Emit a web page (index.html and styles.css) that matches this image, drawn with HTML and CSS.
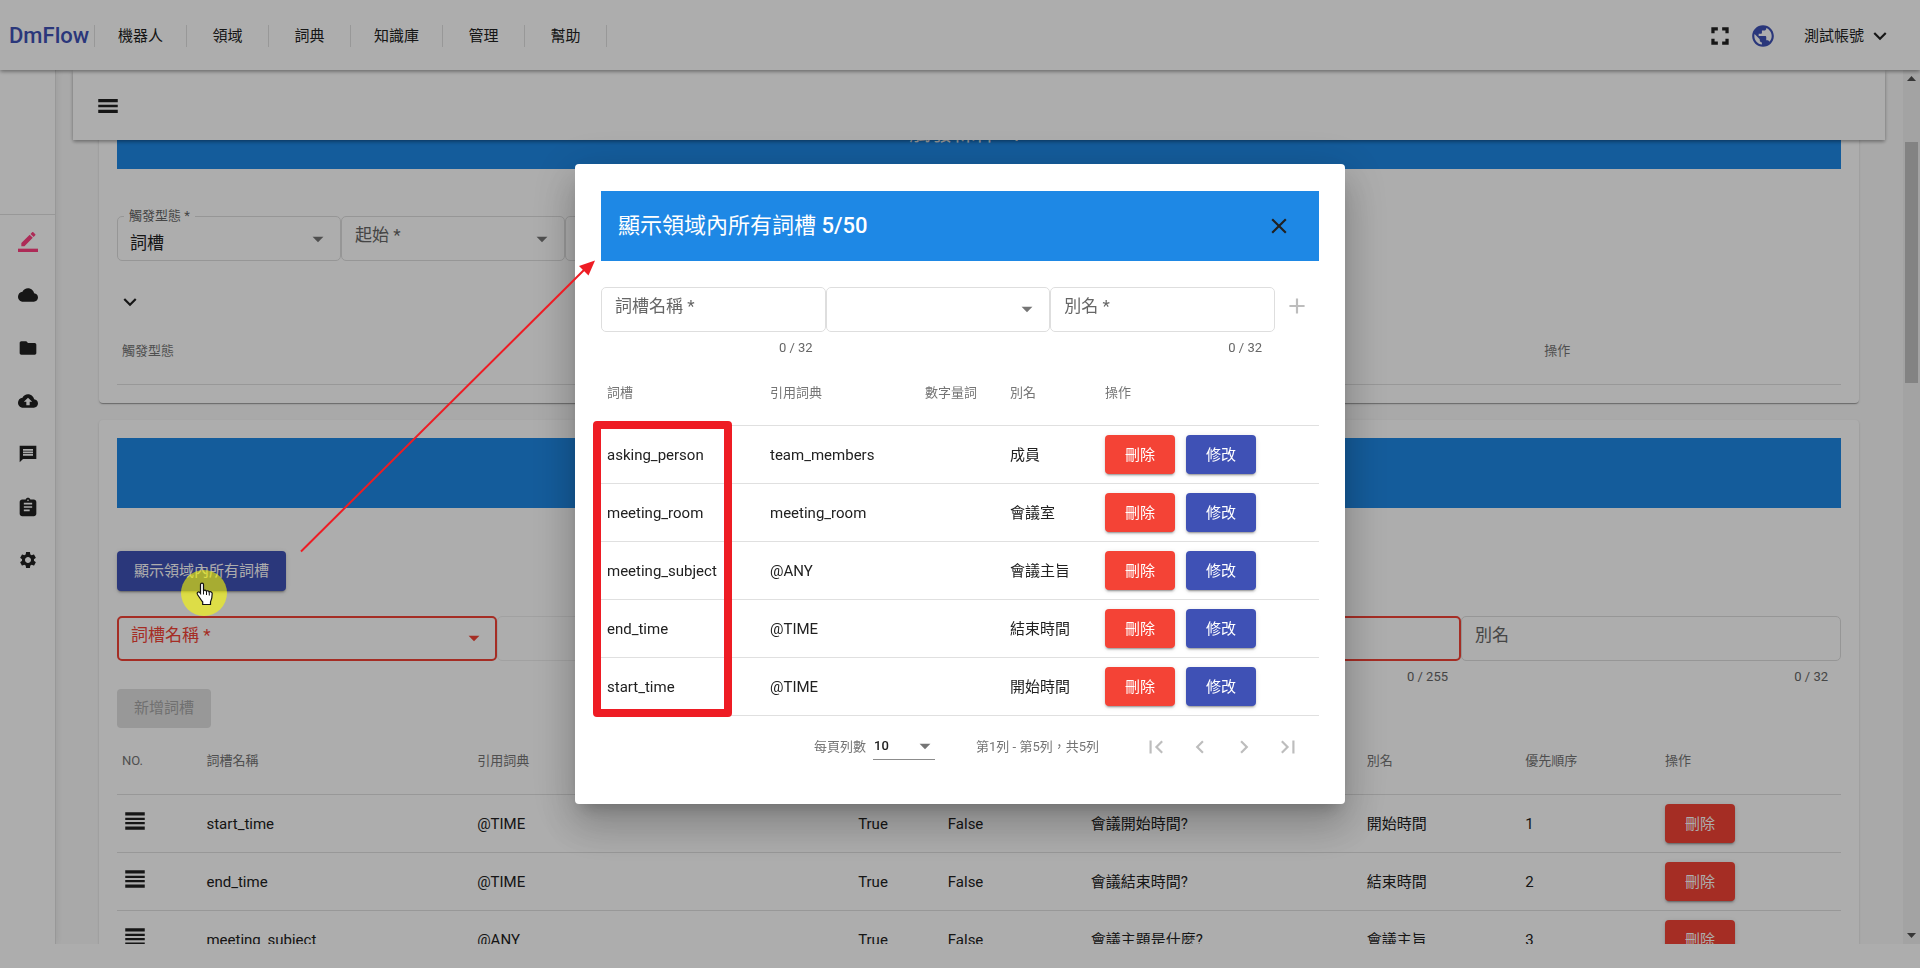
FILE: index.html
```html
<!DOCTYPE html>
<html lang="zh-Hant">
<head>
<meta charset="utf-8">
<title>DmFlow</title>
<link rel="stylesheet" href="styles.css">
</head>
<body>
<svg class="defs" aria-hidden="true">
  <symbol id="i-edit" viewBox="0 0 24 24"><path d="M17.75 7 14 3.250l-10 10V17h3.750l10-10zm2.960-2.960c.39-.39.39-1.020 0-1.410L18.370.29c-.39-.39-1.020-.39-1.410 0L15 2.250 18.750 6l1.960-1.960z"/><path d="M0 20h24v4H0z"/></symbol>
  <symbol id="i-cloud" viewBox="0 0 24 24"><path d="M19.350 10.040C18.670 6.590 15.640 4 12 4 9.110 4 6.600 5.640 5.350 8.040 2.340 8.360 0 10.910 0 14c0 3.310 2.690 6 6 6h13c2.760 0 5-2.240 5-5 0-2.640-2.050-4.780-4.650-4.960z"/></symbol>
  <symbol id="i-folder" viewBox="0 0 24 24"><path d="M10 4H4c-1.100 0-1.990.9-1.990 2L2 18c0 1.100.9 2 2 2h16c1.100 0 2-.9 2-2V8c0-1.100-.9-2-2-2h-8l-2-2z"/></symbol>
  <symbol id="i-upload" viewBox="0 0 24 24"><path d="M19.350 10.040C18.670 6.590 15.640 4 12 4 9.110 4 6.600 5.640 5.350 8.040 2.340 8.360 0 10.910 0 14c0 3.310 2.690 6 6 6h13c2.760 0 5-2.240 5-5 0-2.640-2.050-4.780-4.650-4.960zM14 13v4h-4v-4H7l5-5 5 5h-3z"/></symbol>
  <symbol id="i-chat" viewBox="0 0 24 24"><path d="M22 2H2v20l4-4h16V2zm-4 12H6v-2h12v2zm0-3H6V9h12v2zm0-3H6V6h12v2z"/></symbol>
  <symbol id="i-clip" viewBox="0 0 24 24"><path d="M19 3h-4.180C14.400 1.840 13.300 1 12 1c-1.300 0-2.400.84-2.820 2H5C3.500 3 2 4.500 2 6v14c0 1.500 1.500 3 3 3h14c1.500 0 3-1.500 3-3V6c0-1.500-1.500-3-3-3zm-7 0c.55 0 1 .45 1 1s-.45 1-1 1-1-.45-1-1 .45-1 1-1zm2 14H7v-2h7v2zm3-4H7v-2h10v2zm0-4H7V7h10v2z"/></symbol>
  <symbol id="i-gear" viewBox="0 0 24 24"><path d="M19.140 12.940c.04-.3.06-.61.06-.94 0-.32-.02-.64-.07-.94l2.030-1.580c.18-.14.23-.41.12-.61l-1.920-3.320c-.12-.22-.37-.29-.59-.22l-2.390.96c-.5-.38-1.030-.7-1.620-.94l-.36-2.540c-.04-.24-.24-.41-.48-.41h-3.840c-.24 0-.43.17-.47.41l-.36 2.540c-.59.24-1.130.57-1.620.94l-2.390-.96c-.22-.08-.47 0-.59.22L2.740 8.870c-.12.21-.08.47.12.61l2.030 1.580c-.05.3-.09.63-.09.94s.02.64.07.94l-2.030 1.580c-.18.14-.23.41-.12.61l1.920 3.320c.12.22.37.29.59.22l2.390-.96c.5.38 1.030.7 1.620.94l.36 2.540c.05.24.24.41.48.41h3.840c.24 0 .44-.17.47-.41l.36-2.540c.59-.24 1.130-.56 1.620-.94l2.390.96c.22.08.47 0 .59-.22l1.920-3.320c.12-.22.07-.47-.12-.61l-2.010-1.580zM12 15.600c-1.980 0-3.600-1.620-3.600-3.600s1.620-3.600 3.600-3.600 3.600 1.620 3.600 3.600-1.620 3.600-3.600 3.600z"/></symbol>
  <symbol id="i-full" viewBox="0 0 24 24"><path d="M4 14.500h3V17h3v3H4zM4 9.500h3V7h3V4H4zM17 17h-3v3h6v-5.500h-3zM14 4v3h3v2.500h3V4z"/></symbol>
  <symbol id="i-globe" viewBox="0 0 24 24"><path d="M12 2C6.480 2 2 6.480 2 12s4.480 10 10 10 10-4.480 10-10S17.520 2 12 2zm-1 17.930c-3.950-.49-7-3.850-7-7.930 0-.62.08-1.210.21-1.790L9 15v1c0 1.100.9 2 2 2v1.930zm6.900-2.540c-.26-.81-1-1.390-1.900-1.390h-1v-3c0-.55-.45-1-1-1H8v-2h2c.55 0 1-.45 1-1V7h2c1.100 0 2-.9 2-2v-.41c2.930 1.190 5 4.060 5 7.410 0 2.080-.8 3.970-2.100 5.390z"/></symbol>
  <symbol id="i-down" viewBox="0 0 24 24"><path d="M7.410 8.590 12 13.170l4.590-4.580L18 10l-6 6-6-6 1.410-1.410z"/></symbol>
  <symbol id="i-menu" viewBox="0 0 24 24"><path d="M3 18.500h18v-3H3v3zm0-5.250h18v-2.500H3v2.500zM3 5.500v3h18v-3H3z"/></symbol>
  <symbol id="i-caret" viewBox="0 0 24 24"><path d="M7 10l5 5 5-5z"/></symbol>
  <symbol id="i-close" viewBox="0 0 24 24"><path d="M19 6.410 17.590 5 12 10.590 6.410 5 5 6.410 10.590 12 5 17.590 6.410 19 12 13.410 17.590 19 19 17.590 13.410 12z"/></symbol>
  <symbol id="i-add" viewBox="0 0 24 24"><path d="M19 13h-6v6h-2v-6H5v-2h6V5h2v6h6v2z"/></symbol>
  <symbol id="i-drag" viewBox="0 0 24 24"><path d="M3 15h18v-2H3v2zm0 5h18v-3H3v3zm0-9h18V9H3v2zm0-7v3h18V4H3z"/></symbol>
  <symbol id="i-first" viewBox="0 0 24 24"><path d="M18.410 16.590 13.820 12l4.590-4.590L17 6l-6 6 6 6zM6 6h2v12H6z"/></symbol>
  <symbol id="i-prev" viewBox="0 0 24 24"><path d="M15.410 7.410 14 6l-6 6 6 6 1.410-1.410L10.830 12z"/></symbol>
  <symbol id="i-next" viewBox="0 0 24 24"><path d="M10 6 8.590 7.410 13.170 12l-4.580 4.590L10 18l6-6z"/></symbol>
  <symbol id="i-last" viewBox="0 0 24 24"><path d="M5.590 7.410 10.180 12l-4.590 4.590L7 18l6-6-6-6zM16 6h2v12h-2z"/></symbol>
</svg>

<header class="topbar">
  <a class="logo" href="#">DmFlow</a>
  <nav class="mainnav">
    <button type="button">機器人</button>
    <button type="button">領域</button>
    <button type="button">詞典</button>
    <button type="button">知識庫</button>
    <button type="button">管理</button>
    <button type="button">幫助</button>
  </nav>
  <div class="tools">
    <button class="iconbtn" type="button" aria-label="全螢幕"><svg class="icon"><use href="#i-full"/></svg></button>
    <button class="iconbtn globe" type="button" aria-label="語言"><svg class="icon"><use href="#i-globe"/></svg></button>
    <button class="account" type="button">測試帳號<svg class="icon"><use href="#i-down"/></svg></button>
  </div>
</header>

<div class="body">
  <aside class="sidebar">
    <div class="sidehead"></div>
    <button class="active" type="button" aria-label="編輯"><svg class="icon"><use href="#i-edit"/></svg></button>
    <button type="button" aria-label="雲端"><svg class="icon"><use href="#i-cloud"/></svg></button>
    <button type="button" aria-label="資料夾"><svg class="icon"><use href="#i-folder"/></svg></button>
    <button type="button" aria-label="上傳"><svg class="icon"><use href="#i-upload"/></svg></button>
    <button type="button" aria-label="訊息"><svg class="icon"><use href="#i-chat"/></svg></button>
    <button type="button" aria-label="紀錄"><svg class="icon"><use href="#i-clip"/></svg></button>
    <button type="button" aria-label="設定"><svg class="icon"><use href="#i-gear"/></svg></button>
  </aside>

  <main class="main">
    <div class="appbar">
      <button class="iconbtn" type="button" aria-label="選單"><svg class="icon"><use href="#i-menu"/></svg></button>
    </div>

    <section class="card trigger">
      <h2 class="banner">觸發條件 <span class="count">0/10</span></h2>
      <div class="fields narrow">
        <div class="field floating">
          <label for="t1">觸發型態 *</label>
          <select id="t1"><option>詞槽</option></select>
          <svg class="icon caret"><use href="#i-caret"/></svg>
        </div>
        <div class="field">
          <label for="t2">起始 *</label>
          <select id="t2"><option></option></select>
          <svg class="icon caret"><use href="#i-caret"/></svg>
        </div>
        <div class="field">
          <select id="t3" aria-label="結束"><option></option></select>
          <svg class="icon caret"><use href="#i-caret"/></svg>
        </div>
      </div>
      <button class="iconbtn expand" type="button" aria-label="展開"><svg class="icon"><use href="#i-down"/></svg></button>
      <table class="grid">
        <colgroup><col class="t-type"><col></colgroup>
        <thead><tr><th>觸發型態</th><th>操作</th></tr></thead>
      </table>
    </section>

    <section class="card">
      <h2 class="banner"></h2>
      <button class="btn blue show" type="button">顯示領域內所有詞槽</button>
      <div class="fields slots">
        <div class="field error">
          <label for="s1">詞槽名稱 *</label>
          <select id="s1"><option></option></select>
          <svg class="icon caret"><use href="#i-caret"/></svg>
        </div>
        <div class="field disabled"><input id="s2" type="text" aria-label="引用詞典" disabled></div>
        <div class="field"><input id="s3" type="text" aria-label="必填"></div>
        <div class="field error"><input id="s4" type="text" aria-label="問句"></div>
        <div class="field"><label for="s5">別名</label><input id="s5" type="text"></div>
        <span class="hint"></span><span class="hint"></span><span class="hint"></span>
        <span class="hint">0 / 255</span><span class="hint">0 / 32</span>
      </div>
      <button class="btn off" type="button" disabled>新增詞槽</button>
      <table class="grid main-table">
        <colgroup><col class="m1"><col class="m2"><col class="m3"><col class="m4"><col class="m5"><col class="m6"><col class="m7"><col class="m8"><col class="m9"></colgroup>
        <thead><tr><th>NO.</th><th>詞槽名稱</th><th>引用詞典</th><th></th><th></th><th></th><th>別名</th><th>優先順序</th><th>操作</th></tr></thead>
        <tbody>
          <tr><td><svg class="icon"><use href="#i-drag"/></svg></td><td>start_time</td><td>@TIME</td><td>True</td><td>False</td><td>會議開始時間?</td><td>開始時間</td><td>1</td><td><button class="btn red" type="button">刪除</button></td></tr>
          <tr><td><svg class="icon"><use href="#i-drag"/></svg></td><td>end_time</td><td>@TIME</td><td>True</td><td>False</td><td>會議結束時間?</td><td>結束時間</td><td>2</td><td><button class="btn red" type="button">刪除</button></td></tr>
          <tr><td><svg class="icon"><use href="#i-drag"/></svg></td><td>meeting_subject</td><td>@ANY</td><td>True</td><td>False</td><td>會議主題是什麼?</td><td>會議主旨</td><td>3</td><td><button class="btn red" type="button">刪除</button></td></tr>
        </tbody>
      </table>
    </section>
  </main>

  <div class="scrollbar" aria-hidden="true">
    <svg viewBox="0 0 17 17"><path d="M4 11h9L8.500 6z"/></svg>
    <div class="thumb"></div>
    <svg class="bottom" viewBox="0 0 17 17"><path d="M4 6h9l-4.500 5z"/></svg>
  </div>
</div>
<footer class="bottomstrip"></footer>

<div class="backdrop">
  <div class="dialog" role="dialog" aria-labelledby="dlg-title">
    <div class="dlg-head">
      <h2 id="dlg-title">顯示領域內所有詞槽 <span class="count">5/50</span></h2>
      <button class="iconbtn" type="button" aria-label="關閉"><svg class="icon"><use href="#i-close"/></svg></button>
    </div>
    <div class="fields dlg-fields">
      <div class="field"><label for="d1">詞槽名稱 *</label><input id="d1" type="text"></div>
      <div class="field">
        <select id="d2" aria-label="引用詞典"><option></option></select>
        <svg class="icon caret"><use href="#i-caret"/></svg>
      </div>
      <div class="field"><label for="d3">別名 *</label><input id="d3" type="text"></div>
      <button class="iconbtn add" type="button" aria-label="新增" disabled><svg class="icon"><use href="#i-add"/></svg></button>
      <span class="hint">0 / 32</span><span class="hint"></span><span class="hint">0 / 32</span>
    </div>
    <table class="grid dlg-table">
      <colgroup><col class="d1"><col class="d2"><col class="d3"><col class="d4"><col></colgroup>
      <thead><tr><th>詞槽</th><th>引用詞典</th><th>數字量詞</th><th>別名</th><th>操作</th></tr></thead>
      <tbody>
        <tr><td>asking_person</td><td>team_members</td><td></td><td>成員</td><td><div class="actions"><button class="btn red" type="button">刪除</button><button class="btn blue" type="button">修改</button></div></td></tr>
        <tr><td>meeting_room</td><td>meeting_room</td><td></td><td>會議室</td><td><div class="actions"><button class="btn red" type="button">刪除</button><button class="btn blue" type="button">修改</button></div></td></tr>
        <tr><td>meeting_subject</td><td>@ANY</td><td></td><td>會議主旨</td><td><div class="actions"><button class="btn red" type="button">刪除</button><button class="btn blue" type="button">修改</button></div></td></tr>
        <tr><td>end_time</td><td>@TIME</td><td></td><td>結束時間</td><td><div class="actions"><button class="btn red" type="button">刪除</button><button class="btn blue" type="button">修改</button></div></td></tr>
        <tr><td>start_time</td><td>@TIME</td><td></td><td>開始時間</td><td><div class="actions"><button class="btn red" type="button">刪除</button><button class="btn blue" type="button">修改</button></div></td></tr>
      </tbody>
    </table>
    <div class="pager">
      <label for="rows">每頁列數</label>
      <div class="pagesize">
        <select id="rows"><option>10</option></select>
        <svg class="icon caret"><use href="#i-caret"/></svg>
      </div>
      <span class="range">第1列 - 第5列，共5列</span>
      <button type="button" aria-label="第一頁" disabled><svg class="icon"><use href="#i-first"/></svg></button>
      <button type="button" aria-label="上一頁" disabled><svg class="icon"><use href="#i-prev"/></svg></button>
      <button type="button" aria-label="下一頁" disabled><svg class="icon"><use href="#i-next"/></svg></button>
      <button type="button" aria-label="最後一頁" disabled><svg class="icon"><use href="#i-last"/></svg></button>
    </div>
  </div>
</div>

<svg class="annotations" viewBox="0 0 1920 968" aria-hidden="true">
  <circle cx="204" cy="593" r="23" fill="#ffff00" fill-opacity=".59"/>
  <path d="M301 551.500 586 268" stroke="#ee1c24" stroke-width="2" fill="none"/>
  <path d="M595 260.500 579 266 588.500 275.500z" fill="#ee1c24"/>
  <rect x="597" y="425" width="131" height="288" fill="none" stroke="#ee1c24" stroke-width="8" stroke-linejoin="round"/>
  <path d="M200.500 584.500c0-1.800 3-1.800 3 0v6.500c.5-1.200 2.600-1 2.900.3.700-1 2.600-.6 2.800.8.800-.8 3-.3 3 1.500 0 4-.1 5.400-1.700 8.400v2.500h-7.800v-2.500c-2-2.400-3.200-4.600-5.200-7.500-1.200-1.900 1-3.300 2.400-1.900l.6.800z" fill="#fff" stroke="#111" stroke-width="1.200"/>
  <path d="M203.500 590v4.500M206.500 591.500v3.500M209.300 592.500v3" stroke="#111" fill="none"/>
</svg>
</body>
</html>
```
FILE: styles.css
```css
* { box-sizing: border-box; }
body {
  margin: 0;
  height: 100vh;
  display: flex;
  flex-direction: column;
  overflow: hidden;
  background: #fff;
  color: #212121;
  font: 15px/20px Roboto, "Noto Sans CJK TC", sans-serif;
}
button, input, select { font: inherit; color: inherit; }
button { border: 0; padding: 0; background: none; }
h2 { margin: 0; font-size: 22px; font-weight: 400; line-height: 26px; }
.count { font-weight: 500; }
.defs { position: absolute; width: 0; height: 0; }
.icon { width: 26px; height: 26px; fill: currentColor; display: block; flex: none; }
.iconbtn { color: #212121; }

.topbar {
  flex: none;
  height: 70px;
  display: flex;
  align-items: center;
  padding: 2px 27px 0 9px;
  background: #fff;
  box-shadow: 0 2px 4px -1px rgba(0,0,0,.2), 0 2px 3px rgba(0,0,0,.14), 0 1px 5px rgba(0,0,0,.12);
  position: relative;
  z-index: 3;
}
.logo { width: 85px; color: #3f51b5; font-size: 22px; font-weight: 500; text-decoration: none; }
.mainnav { display: flex; border-left: 1px solid #e0e0e0; }
.mainnav button { min-width: 82px; padding: 0 23px; height: 22px; border-right: 1px solid #e0e0e0; }
.tools { margin-left: auto; display: flex; align-items: center; }
.globe { color: #3f51b5; margin: 0 28px 0 17px; }
.account { display: flex; align-items: center; gap: 3px; }

.body { flex: 1; min-height: 0; display: flex; background: #fafafa; overflow: hidden; }
.sidebar {
  width: 56px;
  flex: none;
  display: flex;
  flex-direction: column;
  background: #fff;
  border-right: 1px solid #e0e0e0;
  box-shadow: 0 0 8px rgba(0,0,0,.1);
}
.sidehead { height: 145px; flex: none; border-bottom: 1px solid #e0e0e0; }
.sidebar button { height: 53px; display: flex; align-items: center; justify-content: center; }
.sidebar .icon { width: 20px; height: 20px; }
.sidebar .active { color: #ff4081; }

.main { flex: 1; min-width: 0; overflow: hidden; padding: 0 18px 0 17px; }
.appbar {
  height: 70px;
  display: flex;
  align-items: center;
  padding: 2px 22px 0;
  background: #fff;
  position: relative;
  z-index: 2;
  box-shadow: 0 2px 4px -1px rgba(0,0,0,.2), 0 2px 3px rgba(0,0,0,.14), 0 1px 5px rgba(0,0,0,.12);
}
.card {
  margin: 0 26px 17px;
  padding: 18px;
  background: #fff;
  border-radius: 4px;
  box-shadow: 0 2px 1px -1px rgba(0,0,0,.2), 0 1px 1px rgba(0,0,0,.14), 0 1px 3px rgba(0,0,0,.12);
}
.trigger { margin-top: -59px; }
.banner { height: 70px; padding: 21px 0; background: #1e88e5; color: #fff; text-align: center; }

.fields { display: grid; }
.narrow { grid-template-columns: 13% 13% 13%; margin-top: 47px; }
.slots { grid-template-columns: 380fr 380fr 204fr 380fr 380fr; margin-top: 25px; }
.dlg-fields { grid-template-columns: 1fr 1fr 1fr 44px; margin-top: 26px; }
.field { display: grid; position: relative; height: 45px; }
.field > * { grid-area: 1 / 1; }
.field input, .field select, .pagesize select {
  width: 100%;
  min-width: 0;
  margin: 0;
  appearance: none;
  background: transparent;
  outline: 0;
}
.field input, .field select {
  padding: 8px 12px 0;
  border: 1px solid #dedede;
  border-radius: 5px;
  font-size: 17px;
}
.field label { align-self: start; padding: 0 14px; font-size: 17px; line-height: 39px; color: #666; white-space: nowrap; }
.field .caret { align-self: center; justify-self: end; margin-right: 10px; }
.caret { color: #757575; pointer-events: none; }
.field.floating label {
  position: absolute;
  z-index: 1;
  top: -10px;
  left: 7px;
  padding: 0 5px;
  background: #fff;
  font-size: 13px;
  line-height: 20px;
}
.field.error input, .field.error select { border: 2px solid #f44336; padding: 7px 12px 0; }
.field.error label, .field.error .caret { color: #f44336; }
.field.disabled input { border-color: #eee; }
.hint { height: 28px; padding-right: 13px; font-size: 13px; line-height: 32px; color: #666; text-align: right; }
.expand { margin: 28px 0 3px; display: block; }

.btn {
  height: 40px;
  padding: 0 17px;
  border-radius: 4px;
  color: #fff;
  white-space: nowrap;
  box-shadow: 0 3px 1px -2px rgba(0,0,0,.2), 0 2px 2px rgba(0,0,0,.14), 0 1px 5px rgba(0,0,0,.12);
}
.grid .btn { width: 70px; height: 39px; padding: 0; display: block; }
.red { background: #f44336; }
.blue { background: #3f51b5; }
.show { display: block; margin-top: 43px; }
.off { display: block; height: 39px; background: #e0e0e0; color: #a6a6a6; box-shadow: none; }

.grid { width: 100%; table-layout: fixed; border-collapse: collapse; }
.grid th { height: 66px; padding: 0 5px; border-bottom: 1px solid #e0e0e0; color: #757575; font-size: 13px; font-weight: 400; text-align: left; }
.grid td { height: 58px; padding: 0 5px; border-bottom: 1px solid #e0e0e0; white-space: nowrap; }
.grid td > .icon { margin-bottom: 5px; }
.main-table th { height: 67px; }
.dlg-table th:first-child, .dlg-table td:first-child { padding-left: 6px; }
.t-type { width: 82.5%; }
.m1 { width: 4.9%; } .m2 { width: 15.7%; } .m3 { width: 22.1%; } .m4 { width: 5.2%; } .m5 { width: 8.3%; }
.m6 { width: 16%; } .m7 { width: 9.2%; } .m8 { width: 8.1%; } .m9 { width: 10.5%; }

.scrollbar { width: 17px; flex: none; display: flex; flex-direction: column; background: #f1f1f1; fill: #505050; }
.scrollbar svg { width: 17px; height: 17px; }
.thumb { height: 241px; margin: 55px 2px 0; background: #c1c1c1; }
.bottom { margin-top: auto; }
.bottomstrip { height: 24px; flex: none; background: #fff; }

.backdrop {
  position: fixed;
  inset: 0;
  z-index: 10;
  display: flex;
  align-items: center;
  justify-content: center;
  background: rgba(0,0,0,.32);
}
.dialog {
  width: 770px;
  max-width: 96%;
  padding: 27px 26px;
  background: #fff;
  border-radius: 4px;
  box-shadow: 0 11px 15px -7px rgba(0,0,0,.2), 0 24px 38px 3px rgba(0,0,0,.14), 0 9px 46px 8px rgba(0,0,0,.12);
}
.dlg-head { height: 70px; display: flex; align-items: center; justify-content: space-between; padding: 0 27px 0 17px; background: #1e88e5; color: #fff; }
.add { height: 39px; display: flex; align-items: center; justify-content: center; color: #bdbdbd; }
.add + .hint { grid-column: 1; }
.d1 { width: 164px; } .d2 { width: 155px; } .d3 { width: 85px; } .d4 { width: 95px; }
.actions { display: flex; gap: 11px; }

.pager { height: 61px; display: flex; align-items: center; justify-content: flex-end; padding-right: 9px; font-size: 13px; color: #757575; }
.pagesize { display: grid; width: 62px; margin: 0 41px 0 7px; border-bottom: 1px solid #8c8c8c; }
.pagesize > * { grid-area: 1 / 1; }
.pagesize select { height: 26px; padding: 0 1px; border: 0; color: #212121; font-weight: 500; }
.pagesize .caret { justify-self: end; margin-right: -3px; }
.range { margin-right: 35px; }
.pager button { width: 44px; height: 44px; display: flex; align-items: center; justify-content: center; color: #bdbdbd; }

.annotations { position: fixed; top: 0; left: 0; width: 1920px; height: 968px; z-index: 20; pointer-events: none; }
```
